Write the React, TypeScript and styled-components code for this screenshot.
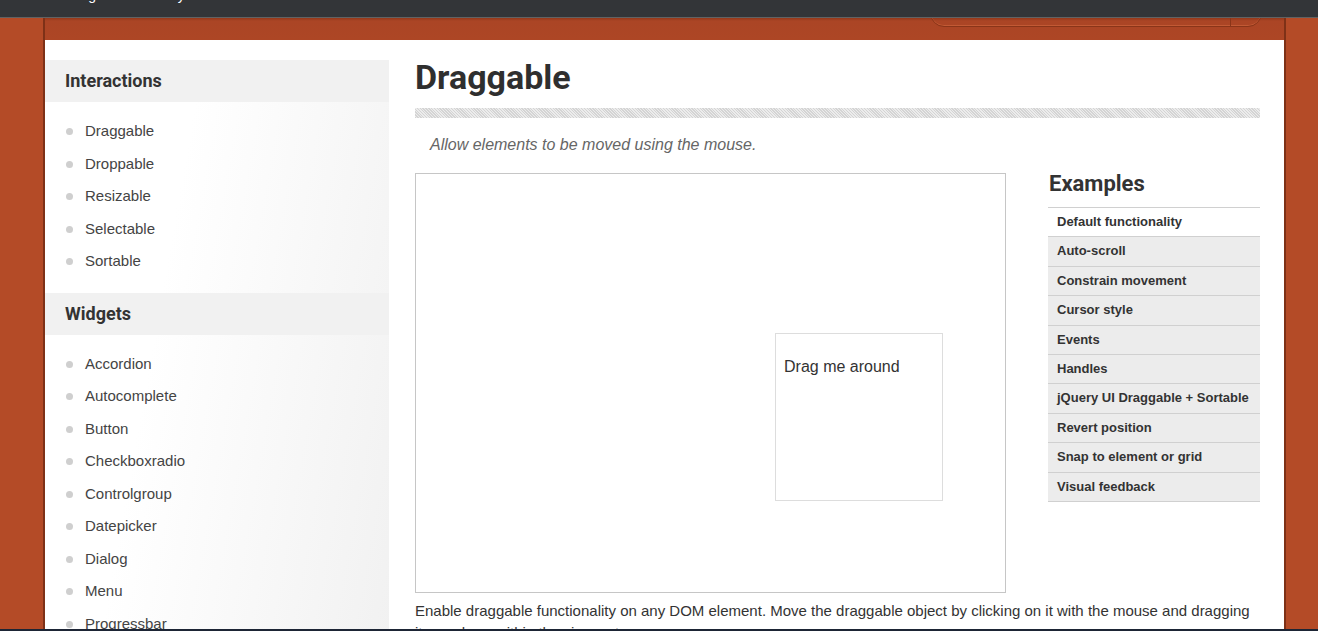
import React from "react";
import styled, { createGlobalStyle } from "styled-components";

const Global = createGlobalStyle`
  html, body { margin: 0; padding: 0; }
  body {
    background: #b44b27;
    height: 631px;
    overflow: hidden;
    font-family: "Liberation Sans", Arial, sans-serif;
  }
`;

const TopBar = styled.div`
  height: 17px;
  background: #333538;
  border-bottom: 1px solid #626262;
  overflow: hidden;
  display: flex;
  gap: 28px;
  padding-left: 68px;
`;

const TopLink = styled.span`
  color: #fff;
  font-size: 14px;
  line-height: 14px;
  margin-top: -12px;
`;

const Frame = styled.div`
  margin-left: 43px;
  width: 1239px;
  border-left: 2px solid #7e3117;
  border-right: 2px solid #7e3117;
`;

const HeaderBand = styled.div`
  height: 22px;
  background: linear-gradient(#94391b 0, #ab4525 3px, #ad4625 100%);
  overflow: hidden;
  display: flex;
  justify-content: flex-end;
  padding-right: 22px;
`;

const SearchBox = styled.div`
  width: 330px;
  height: 30px;
  margin-top: -23px;
  border: 1px solid #8a3519;
  border-radius: 0 0 14px 14px;
  box-shadow: inset 0 -1px 0 #c25a35;
  display: flex;
  justify-content: flex-end;
`;

const SearchDivider = styled.div`
  width: 30px;
  border-left: 1px solid #8a3519;
`;

const Content = styled.div`
  background: #fff;
  height: 600px;
  display: flex;
  padding-top: 20px;
`;

const Sidebar = styled.nav`
  width: 344px;
  flex-shrink: 0;
  background: linear-gradient(100deg, #ffffff 35%, #f1f1f1 100%);
`;

const SideHeading = styled.h3`
  margin: 0;
  height: 42px;
  background: #f1f1f1;
  padding-left: 20px;
  font-family: Roboto, "Liberation Sans", sans-serif;
  font-weight: 700;
  font-size: 18px;
  line-height: 42px;
  color: #333;
`;

const SideList = styled.ul`
  list-style: none;
  margin: 0;
  padding: 13px 0 15px;
`;

const SideItem = styled.li`
  position: relative;
  padding-left: 40px;
  font-size: 15px;
  line-height: 32.5px;
  color: #444;
  &::before {
    content: "";
    position: absolute;
    left: 21px;
    top: 13px;
    width: 7px;
    height: 7px;
    border-radius: 50%;
    background: #cfcfcf;
  }
`;

const Main = styled.main`
  flex: 1;
  min-width: 0;
  padding-left: 26px;
  padding-right: 24px;
`;

const Title = styled.h1`
  margin: 0;
  font-family: Roboto, "Liberation Sans", sans-serif;
  font-weight: 700;
  font-size: 34px;
  line-height: 34px;
  color: #2f2f2f;
`;

const Stripe = styled.div`
  margin-top: 14px;
  height: 10px;
  background: repeating-linear-gradient(
    45deg,
    #d4d4d4 0,
    #d4d4d4 1px,
    #ececec 1px,
    #ececec 2px
  );
`;

const Subtitle = styled.p`
  margin: 17px 0 0;
  padding-left: 15px;
  font-style: italic;
  font-size: 16px;
  line-height: 20px;
  color: #666;
`;

const DemoRow = styled.div`
  margin-top: 18px;
  display: flex;
  gap: 42px;
`;

const DemoFrame = styled.div`
  width: 589px;
  height: 418px;
  border: 1px solid #c6c6c6;
  flex-shrink: 0;
`;

const DragBox = styled.div`
  position: relative;
  width: 150px;
  height: 150px;
  padding: 8px;
  border: 1px solid #dddddd;
  color: #333;
  font-size: 16px;
`;

const DragText = styled.p`
  margin: 14px 0 0;
  line-height: 22px;
`;

const Examples = styled.aside`
  width: 212px;
`;

const ExamplesTitle = styled.h2`
  margin: -1px 0 0 1px;
  font-family: Roboto, "Liberation Sans", sans-serif;
  font-weight: 700;
  font-size: 22px;
  line-height: 24px;
  color: #333;
`;

const ExampleList = styled.ul`
  list-style: none;
  margin: 11px 0 0;
  padding: 0;
  border-top: 1px solid #d0d0d0;
`;

const ExampleItem = styled.li<{ $active?: boolean }>`
  height: 28.4px;
  line-height: 28.4px;
  padding-left: 9px;
  border-bottom: 1px solid #d0d0d0;
  background: ${(p) => (p.$active ? "#ffffff" : "#ececec")};
  font-weight: 700;
  font-size: 13px;
  color: #333;
`;

const Description = styled.p`
  margin: 7px 0 0;
  padding-right: 4px;
  font-size: 15px;
  line-height: 22px;
  color: #333;
`;

const BottomEdge = styled.div`
  position: fixed;
  left: 0;
  right: 0;
  bottom: 0;
  height: 2px;
  background: #1d2535;
`;

const interactions = ["Draggable", "Droppable", "Resizable", "Selectable", "Sortable"];
const widgets = [
  "Accordion",
  "Autocomplete",
  "Button",
  "Checkboxradio",
  "Controlgroup",
  "Datepicker",
  "Dialog",
  "Menu",
  "Progressbar",
  "Selectmenu",
];
const examples = [
  "Default functionality",
  "Auto-scroll",
  "Constrain movement",
  "Cursor style",
  "Events",
  "Handles",
  "jQuery UI Draggable + Sortable",
  "Revert position",
  "Snap to element or grid",
  "Visual feedback",
];

export default function App() {
  return (
    <>
      <Global />
      <TopBar>
        <TopLink>Plugins</TopLink>
        <TopLink>Library</TopLink>
      </TopBar>
      <Frame>
        <HeaderBand>
          <SearchBox>
            <SearchDivider />
          </SearchBox>
        </HeaderBand>
        <Content>
          <Sidebar>
            <SideHeading>Interactions</SideHeading>
            <SideList>
              {interactions.map((i) => (
                <SideItem key={i}>{i}</SideItem>
              ))}
            </SideList>
            <SideHeading>Widgets</SideHeading>
            <SideList>
              {widgets.map((i) => (
                <SideItem key={i}>{i}</SideItem>
              ))}
            </SideList>
          </Sidebar>
          <Main>
            <Title>Draggable</Title>
            <Stripe />
            <Subtitle>Allow elements to be moved using the mouse.</Subtitle>
            <DemoRow>
              <DemoFrame>
                <DragBox style={{ left: 359, top: 159 }}>
                  <DragText>Drag me around</DragText>
                </DragBox>
              </DemoFrame>
              <Examples>
                <ExamplesTitle>Examples</ExamplesTitle>
                <ExampleList>
                  {examples.map((e, i) => (
                    <ExampleItem key={e} $active={i === 0}>
                      {e}
                    </ExampleItem>
                  ))}
                </ExampleList>
              </Examples>
            </DemoRow>
            <Description>
              Enable draggable functionality on any DOM element. Move the draggable object by
              clicking on it with the mouse and dragging it anywhere within the viewport.
            </Description>
          </Main>
        </Content>
      </Frame>
      <BottomEdge />
    </>
  );
}
